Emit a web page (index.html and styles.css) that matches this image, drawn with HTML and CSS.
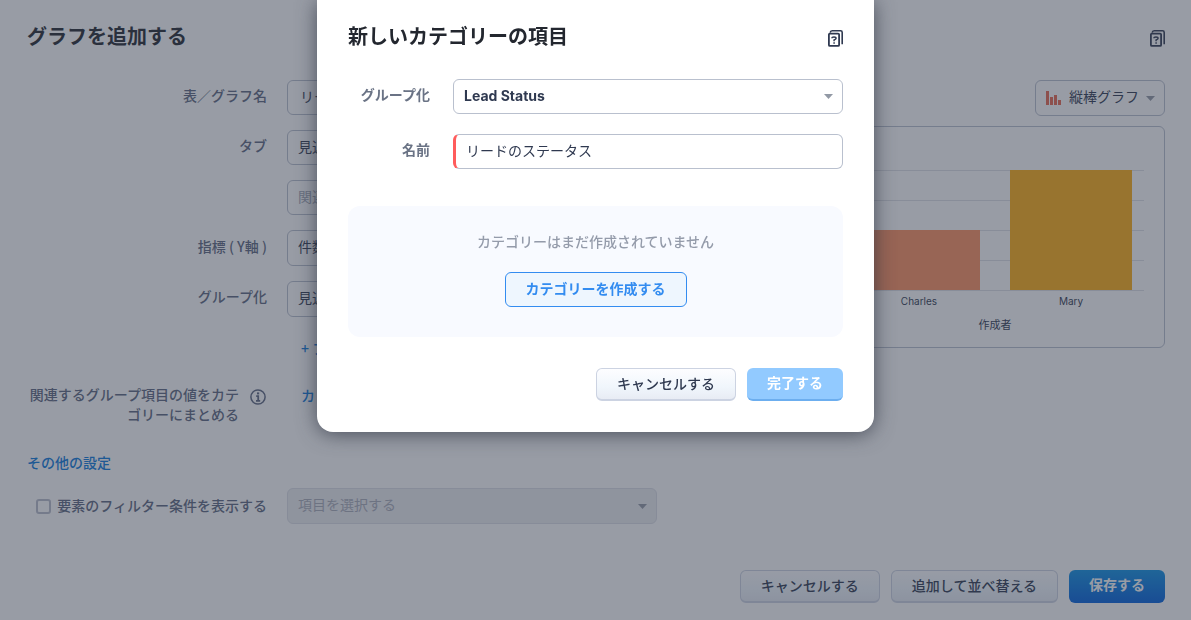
FILE: index.html
```html
<!DOCTYPE html>
<html lang="ja">
<head>
    <meta charset="UTF-8">
    <title>グラフを追加する</title>
    <meta name="viewport" content="width=device-width, initial-scale=1.0">
    <link rel="stylesheet" href="styles.css">
</head>
<body>
    <main class="page">
        <div class="header">
            <h1>グラフを追加する</h1>
            <button class="help" type="button" aria-label="ヘルプ">
                <svg width="15" height="17" viewBox="0 0 15 17" fill="none" stroke="currentColor">
                    <rect x="0.9" y="3.6" width="10.2" height="12.3" rx="1" stroke-width="1.8"/>
                    <path d="M2.2 2.6Q2.4 0.8 4.2 0.8H12.6Q14.2 0.8 14.2 2.4V14.2" stroke-width="1.6"/>
                    <path d="M3.9 8.3Q3.9 6.9 6 6.9T8.1 8.3Q8.1 9.3 6.1 10V11.2M6.1 12.2V13.8" stroke-width="1.5"/>
                </svg>
            </button>
        </div>

        <div class="content">
            <form class="form">
                <label for="chart-name">表／グラフ名</label>
                <input class="field name-field" id="chart-name" type="text" value="リード">

                <label for="tab">タブ</label>
                <select class="field" id="tab"><option>見込み</option></select>

                <select class="field placeholder second" aria-label="関連"><option>関連</option></select>

                <label class="metric-label" for="metric">指標 ( Y軸 )</label>
                <select class="field tall" id="metric"><option>件数</option></select>

                <label for="group">グループ化</label>
                <select class="field tall" id="group"><option>見込み</option></select>

                <a class="form-link second add-link" href="#">+ フ</a>

                <div class="merge-label">
                    <span>関連するグループ項目の値をカテゴリーにまとめる</span>
                    <svg class="info" width="16" height="16" viewBox="0 0 16 16" fill="none" stroke="currentColor">
                        <circle cx="8" cy="8" r="7.1" stroke-width="1.5"/>
                        <path d="M8.1 3.4V5.4" stroke-width="2.2"/>
                        <path d="M6.2 7.2H8.2V11.6M6 11.8H10.2" stroke-width="1.8"/>
                    </svg>
                </div>
                <a class="form-link merge-link" href="#">カ</a>
            </form>

            <section class="preview">
                <label class="chart-type">
                    <svg width="15" height="14" viewBox="0 0 15 14" fill="#e9664f">
                        <path d="M0 0h3v14H0zM4 6h3v8H4zM8 4h3v10H8zM12 9h3v5h-3z"/>
                    </svg>
                    <select aria-label="グラフの種類"><option>縦棒グラフ</option></select>
                </label>
                <div class="chart">
                    <div class="plot">
                        <div class="bar charles"></div>
                        <div class="bar mary"></div>
                    </div>
                    <div class="axis">
                        <span>Charles</span>
                        <span>Mary</span>
                    </div>
                    <p class="axis-title">作成者</p>
                </div>
            </section>
        </div>

        <a class="more" href="#">その他の設定</a>

        <div class="form filter-row">
            <label class="check"><input type="checkbox">要素のフィルター条件を表示する</label>
            <select class="field tall" aria-label="項目" disabled><option>項目を選択する</option></select>
        </div>

        <div class="actions">
            <button class="btn" type="button">キャンセルする</button>
            <button class="btn" type="button">追加して並べ替える</button>
            <button class="btn save" type="button">保存する</button>
        </div>
    </main>

    <div class="overlay">
        <div class="modal" role="dialog" aria-modal="true" aria-labelledby="modal-title">
            <div class="header">
                <h2 id="modal-title">新しいカテゴリーの項目</h2>
                <button class="help" type="button" aria-label="ヘルプ">
                    <svg width="15" height="17" viewBox="0 0 15 17" fill="none" stroke="currentColor">
                        <rect x="0.9" y="3.6" width="10.2" height="12.3" rx="1" stroke-width="1.8"/>
                        <path d="M2.2 2.6Q2.4 0.8 4.2 0.8H12.6Q14.2 0.8 14.2 2.4V14.2" stroke-width="1.6"/>
                        <path d="M3.9 8.3Q3.9 6.9 6 6.9T8.1 8.3Q8.1 9.3 6.1 10V11.2M6.1 12.2V13.8" stroke-width="1.5"/>
                    </svg>
                </button>
            </div>

            <form class="modal-form">
                <label for="group-by">グループ化</label>
                <select class="field strong" id="group-by"><option>Lead Status</option></select>

                <label for="category-name">名前</label>
                <input class="field required" id="category-name" type="text" value="リードのステータス" required>
            </form>

            <div class="empty">
                <p>カテゴリーはまだ作成されていません</p>
                <button class="create" type="button">カテゴリーを作成する</button>
            </div>

            <div class="actions">
                <button class="btn" type="button">キャンセルする</button>
                <button class="btn done" type="button" disabled>完了する</button>
            </div>
        </div>
    </div>
</body>
</html>
```
FILE: styles.css
```css
* {
    margin: 0;
    padding: 0;
    box-sizing: border-box;
}

body {
    background: #fff;
    color: #2f3950;
    font-family: Inter, "Noto Sans CJK JP", sans-serif;
    font-size: 14px;
    line-height: 20px;
}

button,
input,
select {
    font: inherit;
    color: inherit;
}

a {
    color: #0a78dc;
    font-weight: 500;
    text-decoration: none;
}

.page {
    min-height: 100vh;
    padding: 21px 26px 17px 27px;
}

.header {
    display: flex;
    justify-content: space-between;
    align-items: center;
    height: 32px;
}

h1,
h2 {
    font-size: 20px;
    line-height: 32px;
    font-weight: 700;
    color: #23272f;
}

.help {
    display: flex;
    padding-top: 3px;
    border: 0;
    background: none;
    color: #2f3950;
}

/* Form */

.content {
    display: flex;
    justify-content: space-between;
    align-items: flex-start;
    gap: 20px;
    margin-top: 27px;
}

.form {
    display: grid;
    grid-template-columns: 240px 370px;
    gap: 15px 20px;
    color: #5d6780;
    font-weight: 500;
}

.form > label {
    text-align: right;
    line-height: 32px;
}

.metric-label {
    font-family: "Noto Sans CJK JP", sans-serif;
}

.second {
    grid-column: 2;
}

.field {
    width: 100%;
    height: 35px;
    padding: 0 10px 2px;
    border: 1px solid #b9c0ce;
    border-radius: 6px;
    background-color: #fff;
    color: #2f3950;
    font-weight: 400;
}

input.field {
    padding-bottom: 4px;
}

select {
    appearance: none;
    background: url("data:image/svg+xml,%3Csvg xmlns='http://www.w3.org/2000/svg' width='9' height='5'%3E%3Cpath d='M0 0h9L4.5 5z' fill='%239299a5'/%3E%3C/svg%3E") no-repeat right 9px center;
}

.tall {
    height: 36px;
}

.name-field {
    padding-left: 12px;
}

.placeholder {
    color: #a2a8b5;
}

.field:disabled {
    background-color: #edeef1;
    border-color: #dcdfe6;
    color: #a9adb9;
    opacity: 1;
}

.form-link {
    padding-left: 14px;
    font-family: "Noto Sans CJK JP", sans-serif;
}

.add-link {
    line-height: 32px;
}

.merge-label {
    display: flex;
    gap: 11px;
    margin-top: 6px;
    padding-right: 1px;
    text-align: right;
}

.merge-label .info {
    flex: none;
    margin-top: 4px;
}

.merge-link {
    margin-top: 6px;
}

.more {
    display: block;
    margin-top: 28px;
}

.filter-row {
    margin-top: 15px;
}

.check {
    display: flex;
    justify-content: flex-end;
    align-items: center;
    gap: 6px;
}

.check input {
    appearance: none;
    width: 15px;
    height: 15px;
    border: 2px solid #b9bdca;
    border-radius: 3px;
}

/* Chart preview */

.preview {
    flex: 0 1 340px;
}

.chart-type {
    display: flex;
    align-items: center;
    width: 130px;
    height: 36px;
    margin-left: auto;
    padding-left: 10px;
    border: 1px solid #b9c0ce;
    border-radius: 6px;
}

.chart-type svg {
    flex: none;
    margin-right: 8px;
}

.chart-type select {
    flex: 1;
    height: 34px;
    padding-bottom: 2px;
    border: 0;
}

.chart {
    margin-top: 10px;
    padding: 43px 20px 12px;
    border: 1px solid #b9c0ce;
    border-radius: 6px;
    text-align: center;
}

.plot {
    display: flex;
    align-items: flex-end;
    gap: 30px;
    height: 121px;
    padding: 0 12px;
    border-bottom: 1px solid #dfe1e6;
    background: repeating-linear-gradient(#dfe1e6 0 1px, transparent 1px 30px);
}

.bar {
    flex: 1;
}

.charles {
    height: 50%;
    background: #ff905f;
}

.mary {
    height: 100%;
    background: #ffae13;
}

.axis {
    display: flex;
    gap: 30px;
    padding: 0 12px;
    font-size: 10px;
}

.axis span {
    flex: 1;
}

.axis-title {
    margin-top: 4px;
    font-size: 11px;
}

/* Buttons */

.actions {
    display: flex;
    justify-content: flex-end;
    gap: 11px;
}

.page > .actions {
    margin-top: 46px;
}

.btn {
    height: 33px;
    padding: 0 20px 1px;
    border: 1px solid #ccd3e2;
    border-bottom-width: 2px;
    border-radius: 6px;
    background: linear-gradient(#fdfdff, #f0f6fc 60%, #e8ecf4);
    font-weight: 500;
}

.save {
    padding-bottom: 3px;
    border: 0;
    background: linear-gradient(#0d90e4, #005fdc);
    color: #fff;
    font-weight: 700;
}

.done {
    border: 0;
    border-bottom: 2px solid #6caeef;
    background: #92caff;
    color: #fff;
    font-weight: 700;
}

/* Modal */

.overlay {
    position: fixed;
    inset: 0;
    display: flex;
    justify-content: center;
    align-items: flex-start;
    background: rgba(50, 58, 75, 0.5);
}

.modal {
    width: 557px;
    max-width: 100%;
    padding: 21px 31px 31px;
    border-radius: 0 0 16px 16px;
    background: #fff;
    box-shadow: 0 2px 20px rgba(40, 46, 60, 0.7);
}

.modal-form {
    display: grid;
    grid-template-columns: 82px 1fr;
    gap: 20px 23px;
    margin-top: 26px;
}

.modal-form label {
    color: #6a7385;
    font-weight: 700;
    line-height: 32px;
    text-align: right;
}

.strong {
    font-weight: 700;
}

.required {
    border-left: 3px solid #ff5c5c;
}

.empty {
    margin: 37px 0 31px;
    padding: 26px 20px 30px;
    border-radius: 12px;
    background: #f8faff;
    color: #949baa;
    font-weight: 500;
    text-align: center;
}

.create {
    height: 35px;
    margin-top: 20px;
    padding: 0 20px 2px;
    border: 1px solid #338cf0;
    border-radius: 6px;
    background: #eef6fe;
    color: #338cf0;
    font-weight: 700;
}
```
